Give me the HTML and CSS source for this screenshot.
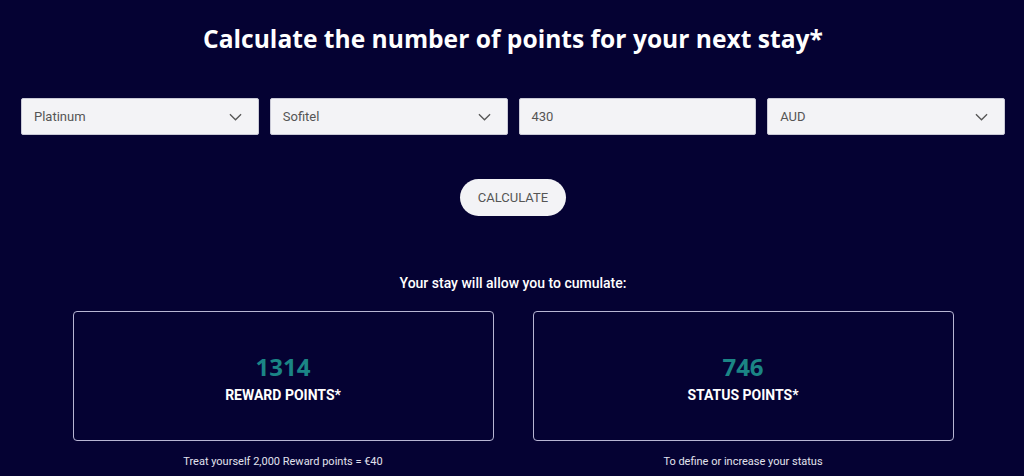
FILE: index.html
```html
<!DOCTYPE html>
<html lang="en">
<head>
  <meta charset="UTF-8">
  <title>Points calculator</title>
  <link rel="stylesheet" href="styles.css">
</head>
<body>
  <div class="calculator">
    <h2>Calculate the number of points for your next stay*</h2>
    <form class="fields">
      <div class="field select">
        <span>Platinum</span>
        <svg viewBox="0 0 14 8" width="13" height="8"><path d="M1 1l6 6 6-6" fill="none" stroke="#555" stroke-width="1.4"/></svg>
      </div>
      <div class="field select">
        <span>Sofitel</span>
        <svg viewBox="0 0 14 8" width="13" height="8"><path d="M1 1l6 6 6-6" fill="none" stroke="#555" stroke-width="1.4"/></svg>
      </div>
      <div class="field">
        <span>430</span>
      </div>
      <div class="field select">
        <span>AUD</span>
        <svg viewBox="0 0 14 8" width="13" height="8"><path d="M1 1l6 6 6-6" fill="none" stroke="#555" stroke-width="1.4"/></svg>
      </div>
    </form>

    <div class="actions">
      <button type="button">CALCULATE</button>
    </div>

    <p class="intro">Your stay will allow you to cumulate:</p>

    <div class="results">
      <div class="result">
        <div class="card">
          <div class="value">1314</div>
          <div class="label">REWARD POINTS*</div>
        </div>
        <p class="note">Treat yourself 2,000 Reward points = €40</p>
      </div>
      <div class="result">
        <div class="card">
          <div class="value">746</div>
          <div class="label">STATUS POINTS*</div>
        </div>
        <p class="note">To define or increase your status</p>
      </div>
    </div>
  </div>
</body>
</html>
```

FILE: styles.css
```css
body {
  margin: 0;
  background: #050233;
  font-family: Roboto, "Liberation Sans", sans-serif;
  color: white;
}

.calculator {
  padding: 22px 19px 0 21px;
}

h2 {
  margin: 0;
  text-align: center;
  font-family: "Open Sans", "Liberation Sans", sans-serif;
  font-weight: 700;
  font-size: 24.6px;
  line-height: 34px;
}

.fields {
  display: grid;
  grid-template-columns: repeat(4, 1fr);
  gap: 11px;
  margin-top: 42px;
}

.field {
  display: flex;
  align-items: center;
  justify-content: space-between;
  height: 37px;
  box-sizing: border-box;
  padding: 0 16px 0 12px;
  background: #f3f3f6;
  border: 1px solid #c9c9d6;
  border-radius: 2px;
  color: #555;
  font-size: 13px;
}

.actions {
  display: flex;
  justify-content: center;
  margin-top: 44px;
}

button {
  height: 37px;
  padding: 0 18px;
  background: #f3f3f6;
  border: none;
  border-radius: 19px;
  color: #555;
  font-family: Roboto, sans-serif;
  font-size: 13px;
}

.intro {
  margin: 59px 0 0;
  text-align: center;
  font-size: 14px;
  font-weight: 500;
  line-height: 16px;
}

.results {
  display: flex;
  justify-content: center;
  gap: 39px;
  margin-top: 20px;
}

.result {
  width: 421px;
}

.card {
  height: 130px;
  box-sizing: border-box;
  border: 1px solid #b8b6d4;
  border-radius: 4px;
  display: flex;
  flex-direction: column;
  align-items: center;
  justify-content: center;
  padding-top: 4px;
}

.value {
  font-family: "Open Sans", sans-serif;
  font-weight: 700;
  font-size: 24px;
  line-height: 28px;
  color: #1b8585;
}

.label {
  font-size: 14px;
  font-weight: 700;
  margin-top: 6px;
}

.note {
  margin: 14px 0 0;
  text-align: center;
  font-size: 11px;
  color: #e2e2ee;
}
```
